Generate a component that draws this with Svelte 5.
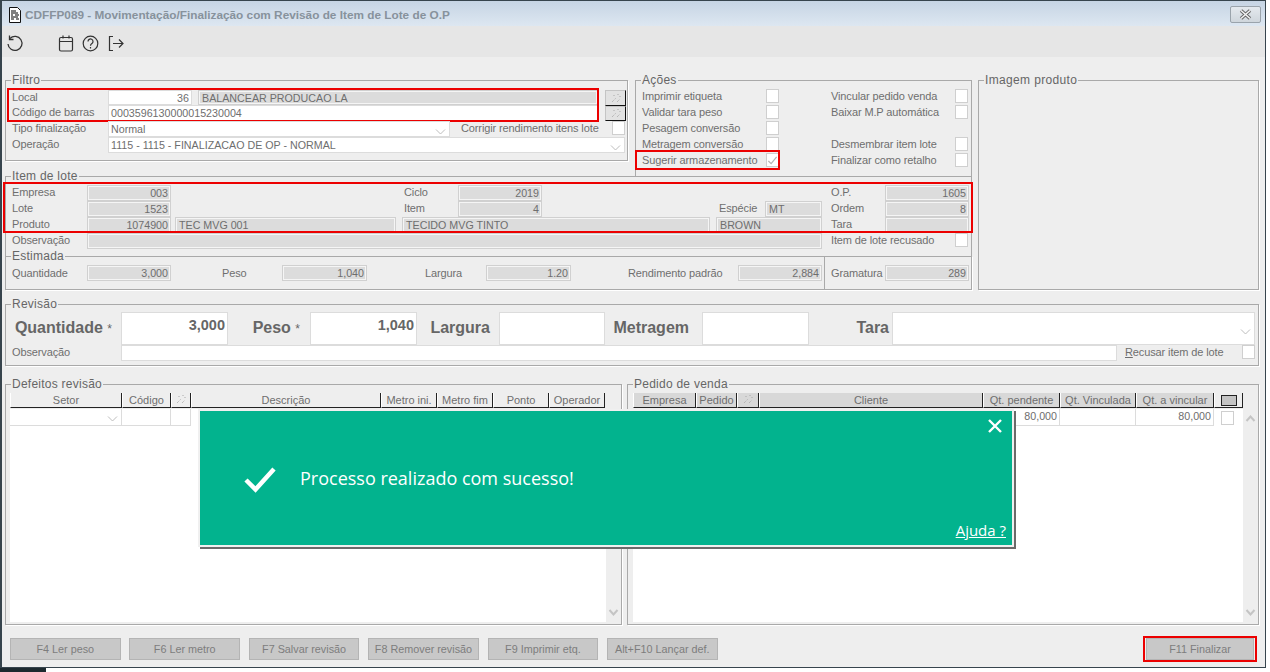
<script>
  const acoes = [
    ['Imprimir etiqueta', false, 'Vincular pedido venda', true],
    ['Validar tara peso', false, 'Baixar M.P automática', true],
    ['Pesagem conversão', false, '', false],
    ['Metragem conversão', false, 'Desmembrar item lote', true]
  ];
  const defeitos = ['Setor', 'Código', '*', 'Descrição', 'Metro ini.', 'Metro fim', 'Ponto', 'Operador'];
  const pedidos = ['Empresa', 'Pedido', '*', 'Cliente', 'Qt. pendente', 'Qt. Vinculada', 'Qt. a vincular'];
  const botoes = ['F4 Ler peso', 'F6 Ler metro', 'F7 Salvar revisão', 'F8 Remover revisão', 'F9 Imprimir etq.', 'Alt+F10 Lançar def.'];
</script>

{#snippet chevron()}
  <svg class="chev" width="11" height="6" viewBox="0 0 11 6"><path d="M1 .5 5.500 5 10 .5" fill="none" stroke="#bdbdbd" /></svg>
{/snippet}

{#snippet wand()}
  <svg width="12" height="10" viewBox="0 0 12 10"><path d="M2 9 6 5M7 9l3-3M8 1v1M4 2v1M10 3v1" stroke="#a8a8a8" stroke-dasharray="1 1" fill="none" /></svg>
{/snippet}

{#snippet scrollbar()}
  <div class="scroll">
    <svg width="11" height="7" viewBox="0 0 11 7"><path d="M1.500 6 5.500 1.500 9.500 6" fill="none" stroke="#c4c4c4" stroke-width="2" /></svg>
    <svg width="11" height="7" viewBox="0 0 11 7"><path d="M1.500 1 5.500 5.500 9.500 1" fill="none" stroke="#c4c4c4" stroke-width="2" /></svg>
  </div>
{/snippet}

<div class="window">
  <header class="titlebar">
    <svg width="14" height="18" viewBox="0 0 14 18"><path d="M1.500 1.500h8l3 3v12h-11z" fill="#fff" stroke="#111" /><path d="M3 5h5M3 7h7M3 9h2M7 9h4M3 11h7M3 13h3M8 13h3" stroke="#000" /></svg>
    <span class="title">CDFFP089 - Movimentação/Finalização com Revisão de Item de Lote de O.P</span>
    <button class="close" aria-label="Fechar">
      <svg width="13" height="11" viewBox="0 0 13 11"><path d="M2 1.500 11 9.500M11 1.500 2 9.500" stroke="#666" stroke-width="3.500" /><path d="M2 1.500 11 9.500M11 1.500 2 9.500" stroke="#f4f4f4" stroke-width="1.500" fill="none" /></svg>
    </button>
  </header>

  <nav class="toolbar">
    <svg class="undo" width="18" height="17" viewBox="0 0 18 17"><path d="M4 3.500A7 7 0 1 1 2 9" fill="none" stroke="#333" stroke-width="1.300" /><path d="M3.500.5v4h4" fill="none" stroke="#333" stroke-width="1.300" /></svg>
    <svg class="cal" width="16" height="17" viewBox="0 0 16 17"><rect x="1.500" y="2.500" width="13" height="13.500" rx="1.500" fill="none" stroke="#333" stroke-width="1.200" /><path d="M1.500 6.500h13M5 .5v3M11 .5v3" stroke="#333" stroke-width="1.200" /></svg>
    <svg class="help" width="17" height="17" viewBox="0 0 17 17"><circle cx="8.500" cy="8.500" r="7.300" fill="none" stroke="#333" stroke-width="1.200" /><path d="M6 6.500a2.500 2.500 0 1 1 4 2c-1 .7-1.500 1-1.500 2.300" fill="none" stroke="#333" stroke-width="1.200" /><path d="M8.500 12v1.500" stroke="#333" stroke-width="1.200" /></svg>
    <svg class="exit" width="16" height="17" viewBox="0 0 16 17"><path d="M5 1.500H1.500v14H5" fill="none" stroke="#333" stroke-width="1.200" /><path d="M5 8.500h10M11 4.500l4 4-4 4" fill="none" stroke="#333" stroke-width="1.200" /></svg>
  </nav>

  <main class="content">
    <div class="top">
      <div class="top-left">
        <div class="top-row">
          <fieldset class="filtro">
            <legend>Filtro</legend>
            <div class="filtro-head">
              <div class="mark mark-filtro">
                <div class="row r-filtro">
                  <span class="lbl">Local</span>
                  <div class="f right white">36</div>
                  <div class="f ro wide">BALANCEAR PRODUCAO LA</div>
                </div>
                <div class="row r-barras">
                  <span class="lbl">Código de barras</span>
                  <div class="f white">0003596130000015230004</div>
                </div>
              </div>
              <div class="wands">
                <button class="wand" aria-label="Pesquisar local">{@render wand()}</button>
                <button class="wand" aria-label="Pesquisar código">{@render wand()}</button>
              </div>
            </div>
            <div class="row r-tipo">
              <span class="lbl">Tipo finalização</span>
              <div class="f white sel">Normal {@render chevron()}</div>
              <span class="lbl corr">Corrigir rendimento itens lote</span>
              <span class="chk"></span>
            </div>
            <div class="row r-op">
              <span class="lbl">Operação</span>
              <div class="f white sel">1115 - 1115 - FINALIZACAO DE OP - NORMAL {@render chevron()}</div>
            </div>
          </fieldset>

          <fieldset class="acoes">
            <legend>Ações</legend>
            <div class="acoes-grid">
              {#each acoes as [a, , b, hasB]}
                <span class="lbl">{a}</span>
                <span class="chk"></span>
                <span></span>
                <span class="lbl">{b}</span>
                {#if hasB}<span class="chk"></span>{:else}<span></span>{/if}
              {/each}
              <div class="mark mark-sugerir">
                <span class="lbl">Sugerir armazenamento</span>
                <span class="chk">
                  <svg width="12" height="11" viewBox="0 0 12 11"><path d="M1.500 6 4.500 9 10.500 1.500" fill="none" stroke="#b4b4b4" stroke-width="1.300" /></svg>
                </span>
              </div>
              <span></span>
              <span class="lbl">Finalizar como retalho</span>
              <span class="chk"></span>
            </div>
          </fieldset>
        </div>

        <fieldset class="item">
          <legend>Item de lote</legend>
          <div class="mark mark-item">
            <div class="item-grid">
              <span class="lbl c1">Empresa</span><div class="f ro right c2">003</div>
              <span class="lbl c6">Ciclo</span><div class="f ro right c7">2019</div>
              <span class="lbl c13">O.P.</span><div class="f ro right c14">1605</div>

              <span class="lbl c1">Lote</span><div class="f ro right c2">1523</div>
              <span class="lbl c6">Item</span><div class="f ro right c7">4</div>
              <span class="lbl c10">Espécie</span><div class="f ro c11">MT</div>
              <span class="lbl c13">Ordem</span><div class="f ro right c14">8</div>

              <span class="lbl c1">Produto</span><div class="f ro right c2">1074900</div>
              <div class="f ro c4">TEC MVG 001</div>
              <div class="f ro c6-8">TECIDO MVG TINTO</div>
              <div class="f ro c10-11">BROWN</div>
              <span class="lbl c13">Tara</span><div class="f ro c14"></div>
            </div>
          </div>
          <div class="item-grid">
            <span class="lbl c1">Observação</span>
            <div class="f ro c2-11"></div>
            <span class="lbl c13">Item de lote recusado</span>
            <span class="chk c14 chk-end"></span>
          </div>
        </fieldset>

        <fieldset class="estimada">
          <legend>Estimada</legend>
          <div class="est-grid">
            <span class="lbl first">Quantidade</span><div class="f ro right">3,000</div><span></span>
            <span class="lbl">Peso</span><div class="f ro right">1,040</div><span></span>
            <span class="lbl">Largura</span><div class="f ro right">1.20</div><span></span>
            <span class="lbl">Rendimento padrão</span><div class="f ro right">2,884</div><span></span>
            <span class="lbl">Gramatura</span><div class="f ro right">289</div>
          </div>
        </fieldset>
      </div>

      <fieldset class="imagem">
        <legend>Imagem produto</legend>
      </fieldset>
    </div>

    <fieldset class="revisao">
      <legend>Revisão</legend>
      <div class="rev-grid">
        <span class="big b-q">Quantidade <small>*</small></span>
        <div class="f white bignum">3,000</div>
        <span class="big b-p">Peso <small>*</small></span>
        <div class="f white bignum">1,040</div>
        <span class="big b-l">Largura</span>
        <div class="f white"></div>
        <span class="big b-m">Metragem</span>
        <div class="f white"></div>
        <span class="big b-t">Tara</span>
        <div class="f white sel">{@render chevron()}</div>
      </div>
      <div class="row r-revobs">
        <span class="lbl">Observação</span>
        <div class="f white"></div>
        <span class="lbl recusar"><u>R</u>ecusar item de lote</span>
        <span class="chk"></span>
      </div>
    </fieldset>

    <div class="tables">
      <fieldset class="tbl">
        <legend>Defeitos revisão</legend>
        <div class="grid-wrap">
          <div class="thead t-def">
            {#each defeitos as h}
              <div class="th">{#if h === '*'}{@render wand()}{:else}{h}{/if}</div>
            {/each}
          </div>
          <div class="tbody-wrap">
            <div class="tbody">
              <div class="tr t-def">
                <div class="td sel">{@render chevron()}</div>
                <div class="td"></div>
                <div class="td"></div>
              </div>
            </div>
            {@render scrollbar()}
          </div>
        </div>
      </fieldset>

      <fieldset class="tbl">
        <legend>Pedido de venda</legend>
        <div class="grid-wrap">
          <div class="thead t-ped dark">
            {#each pedidos as h}
              <div class="th">{#if h === '*'}{@render wand()}{:else}{h}{/if}</div>
            {/each}
            <div class="th th-check"><span class="square"></span></div>
          </div>
          <div class="tbody-wrap">
            <div class="tbody">
              <div class="tr t-ped">
                <div class="td"></div><div class="td"></div><div class="td"></div><div class="td"></div>
                <div class="td right">80,000</div>
                <div class="td"></div>
                <div class="td right">80,000</div>
                <div class="td td-check"><span class="chk"></span></div>
              </div>
            </div>
            {@render scrollbar()}
          </div>
        </div>
      </fieldset>
    </div>

    <footer class="footer">
      {#each botoes as b}
        <button class="btn">{b}</button>
      {/each}
      <div class="mark mark-final">
        <button class="btn final">F11 Finalizar</button>
      </div>
    </footer>
  </main>

  <div class="toast" role="alert">
    <svg class="toast-check" width="34" height="27" viewBox="0 0 34 27"><path d="M3 14 12.500 23.500 31 3" fill="none" stroke="#fff" stroke-width="4.500" /></svg>
    <span class="toast-msg">Processo realizado com sucesso!</span>
    <svg class="toast-x" width="14" height="14" viewBox="0 0 14 14"><path d="M1 1 13 13M13 1 1 13" stroke="#fff" stroke-width="2.400" /></svg>
    <span class="toast-help">Ajuda ?</span>
  </div>
</div>
<div class="taskbar"></div>

<style>
  :global(body) { margin: 0; background: #fff; }
  * { box-sizing: border-box; }

  .window {
    position: relative;
    width: 1266px;
    height: 668px;
    background: #eee;
    border: 1px solid #37444d;
    border-left-width: 2px;
    display: flex;
    flex-direction: column;
    font: 11px/16px "Liberation Sans", Arial, sans-serif;
    color: #6e6e6e;
    overflow: hidden;
  }
  .taskbar { width: 46px; height: 4px; background: #1e2a30; }

  .titlebar {
    height: 25px;
    flex: none;
    display: flex;
    align-items: center;
    padding: 2px 4px 0 6px;
    background: linear-gradient(#c6d4e4, #dde7f1);
  }
  .title { margin-left: 3px; font-weight: bold; font-size: 11.800px; color: #87929c; white-space: nowrap; }
  .close {
    margin-left: auto;
    width: 31px;
    height: 17px;
    padding: 0;
    border: 1px solid #9aa3ab;
    border-radius: 2px;
    background: linear-gradient(#e4e9ee, #cfd6dc);
    display: flex;
    align-items: center;
    justify-content: center;
  }

  .toolbar {
    height: 31px;
    flex: none;
    background: #e6e6e6;
    display: flex;
    align-items: center;
    padding: 3px 0 0 4px;
  }
  .cal { margin-left: 34px; }
  .help { margin-left: 8px; }
  .exit { margin-left: 9px; }

  .content {
    flex: 1;
    display: flex;
    flex-direction: column;
    padding: 17px 5px 0 3px;
    min-height: 0;
  }

  fieldset {
    margin: 0;
    padding: 0;
    min-width: 0;
    border: 1px solid #a9a9a9;
    box-shadow: 1px 1px 0 #fff;
  }
  legend {
    margin-left: 5px;
    padding: 0 1px;
    font-size: 12px;
    line-height: 13px;
    height: 13px;
    color: #666;
    letter-spacing: .25px;
  }

  .top { display: flex; gap: 6px; height: 216px; flex: none; }
  .top-left { width: 967px; flex: none; }
  .top-row { display: flex; gap: 7px; height: 103px; }
  .filtro { width: 623px; height: 87px; flex: none; }
  .acoes { width: 337px; height: 103px; flex: none; border-bottom: 0; box-shadow: none; }
  .imagem { width: 281px; height: 216px; flex: none; }
  .imagem legend { margin-left: 5px; letter-spacing: .35px; }
  .item { margin-top: -7px; height: 87px; border-bottom: 0; box-shadow: none; position: relative; }
  .estimada { margin-top: -7px; height: 40px; position: relative; }
  .estimada::after {
    content: "";
    position: absolute;
    left: 818px;
    top: -7px;
    bottom: 0;
    width: 1px;
    background: #a9a9a9;
  }

  .lbl { white-space: nowrap; line-height: 15px; letter-spacing: -.12px; }
  .f {
    height: 16px;
    padding: 0 2px;
    font-size: 10.700px;
    line-height: 15px;
    white-space: nowrap;
    overflow: hidden;
    border: 1px solid #d6d6d6;
    position: relative;
  }
  .white { background: #fff; border-color: #dcdcdc; }
  .ro { background: #dcdcdc; border-color: #f5f5f5; outline: 1px solid #d0d0d0; outline-offset: -1px; box-shadow: inset 0 0 0 1px #f5f5f5; padding-left: 3px; }
  .right { text-align: right; }
  .sel .chev, .td.sel .chev { position: absolute; right: 3px; top: 7px; }
  .chk {
    display: flex;
    align-items: center;
    justify-content: center;
    width: 13px;
    height: 14px;
    background: #fff;
    border: 1px solid #cfcfcf;
  }

  .mark { position: relative; }
  .mark::after {
    content: "";
    position: absolute;
    border: 2px solid #ec0000;
    pointer-events: none;
  }
  .mark-filtro::after { inset: -2px -1px -1px -1px; }
  .mark-sugerir::after { inset: -3px 0 -1px -7px; }
  .mark-item::after { inset: -3px -2px 0 -3px; }
  .mark-final::after { inset: -2px -3px -2px -3px; }

  .filtro-head { display: flex; padding-top: 3px; height: 34px; }
  .filtro-head .mark { width: 590px; margin-left: 2px; }
  .row { display: grid; align-items: start; }
  .r-filtro { grid-template-columns: 96px 84px 6px 400px; height: 15px; padding-left: 4px; }
  .r-filtro .f { height: 15px; }
  .r-filtro .wide { grid-column: 4; }
  .r-barras { grid-template-columns: 96px 490px; height: 16px; padding-left: 4px; }
  .wands { display: flex; flex-direction: column; margin-left: 7px; }
  .wand {
    width: 21px;
    height: 16px;
    padding: 0;
    background: #e2e2e2;
    border: 1px solid #c4c4c4;
    border-right-color: #111;
    border-bottom-color: #111;
    display: flex;
    align-items: center;
    justify-content: center;
  }
  .r-tipo { grid-template-columns: 96px 342px 11px 151px 14px; padding-left: 6px; height: 16px; }
  .r-tipo .corr { grid-column: 4; }
  .r-op { grid-template-columns: 96px 517px; padding-left: 6px; height: 16px; }

  .acoes-grid {
    display: grid;
    grid-template-columns: 124px 14px 51px 124px 14px;
    grid-auto-rows: 16px;
    padding: 2px 0 0 6px;
    align-items: start;
  }
  .mark-sugerir { grid-column: 1 / 3; display: grid; grid-template-columns: 124px 14px; height: 16px; }

  .item-grid {
    display: grid;
    grid-template-columns: 81px 84px 4px 221px 6px 56px 84px 168px 6px 49px 57px 9px 54px 84px;
    grid-auto-rows: 16px;
  }
  .mark-item { margin-top: 2px; height: 48px; }
  .c1 { grid-column: 1; padding-left: 6px; }
  .c2 { grid-column: 2; }
  .c4 { grid-column: 4; }
  .c6 { grid-column: 6; padding-left: 2px; }
  .c7 { grid-column: 7; }
  .c10 { grid-column: 10; padding-left: 3px; }
  .c11 { grid-column: 11; }
  .c13 { grid-column: 13; }
  .c14 { grid-column: 14; }
  .c6-8 { grid-column: 6 / 9; }
  .c10-11 { grid-column: 10 / 12; }
  .c2-11 { grid-column: 2 / 12; }
  .chk-end { justify-self: end; margin-right: 1px; }

  .est-grid {
    display: grid;
    grid-template-columns: 81px 84px 51px 60px 85px 58px 61px 85px 57px 110px 84px 9px 54px 84px;
    padding-top: 2px;
    align-items: center;
  }
  .first { padding-left: 6px; }

  .revisao { margin-top: 8px; height: 68px; width: 1254px; flex: none; }
  .rev-grid {
    display: grid;
    grid-template-columns: 115px 107px 82px 107px 82px 106px 97px 107px 83px 363px;
    height: 34px;
    padding-top: 1px;
    align-items: start;
  }
  .rev-grid .f { height: 33px; }
  .big { font-size: 16px; font-weight: bold; color: #666; line-height: 32px; text-align: right; white-space: nowrap; }
  .big small { font-size: 12px; font-weight: normal; }
  .b-q { padding-right: 9px; }
  .b-p { padding-right: 10px; }
  .b-l { padding-right: 9px; }
  .b-m { padding-right: 13px; }
  .b-t { padding-right: 3px; }
  .rev-grid .bignum { font-size: 14.500px; font-weight: bold; text-align: right; line-height: 24px; padding-right: 2px; color: #666; }
  .rev-grid .sel .chev { top: 16px; }
  .r-revobs { grid-template-columns: 109px 996px 8px 117px 14px; padding-left: 6px; height: 17px; }
  .recusar { grid-column: 4; }

  .tables { display: flex; gap: 5px; margin-top: 12px; height: 247px; flex: none; }
  .tbl:first-child { width: 617px; }
  .tbl:last-child { width: 632px; }
  .grid-wrap { padding: 2px 0 0 4px; display: flex; flex-direction: column; height: 231px; }
  .tbl:last-child .grid-wrap { padding-left: 5px; }
  .thead { display: grid; height: 15px; }
  .t-def { grid-template-columns: 112px 49px 20px 190px 56px 56px 56px 56px; }
  .t-ped { grid-template-columns: 63px 41px 22px 224px 77px 76px 78px 29px; }
  .th {
    background: #eee;
    border-right: 1.500px solid #222;
    border-bottom: 1px solid #222;
    border-left: 1px solid #fff;
    text-align: center;
    line-height: 14px;
    font-size: 11px;
    overflow: hidden;
    white-space: nowrap;
  }
  .dark .th { background: #d8d8d8; }
  .th-check { display: flex; align-items: center; justify-content: center; }
  .dark .th-check { background: #eee; }
  .square { width: 16px; height: 11px; background: #c4c4c4; border: 1px solid #222; }
  .tbody-wrap { display: flex; flex: 1; margin-top: 1px; min-height: 0; }
  .tbody { flex: 1; background: #fff; min-width: 0; }
  .tr { display: grid; height: 17px; }
  .td {
    position: relative;
    border-right: 1px solid #dcdcdc;
    border-bottom: 1px solid #dcdcdc;
    line-height: 15px;
    padding: 0 2px;
    font-size: 10.700px;
  }
  .td-check { display: flex; align-items: center; padding: 0 0 0 7px; border: 0; }
  .scroll {
    width: 15px;
    flex: none;
    display: flex;
    flex-direction: column;
    justify-content: space-between;
    align-items: center;
    padding: 6px 0 6px;
  }

  .footer {
    display: flex;
    gap: 8.800px;
    margin-top: 13px;
    padding: 0 6px 0 5px;
    align-items: flex-start;
  }
  .btn {
    width: 110.600px;
    height: 22px;
    padding: 0;
    background: #c8c8c8;
    border: 1px solid #b4b4b4;
    color: #7d7d7d;
    font: 10.800px/20px "Liberation Sans", Arial, sans-serif;
    white-space: nowrap;
    overflow: hidden;
  }
  .mark-final { margin-left: auto; display: flex; }
  .final { width: 108px; }

  .toast {
    position: absolute;
    left: 196px;
    top: 408px;
    width: 816px;
    height: 138px;
    background: #02b38e;
    border: 2px solid #f0f0f0;
    box-shadow: 2px 2px 0 #6a6a6a;
    color: #fff;
  }
  .toast-check { position: absolute; left: 43px; top: 55px; }
  .toast-msg {
    position: absolute;
    left: 100px;
    top: 55px;
    font: 18px/24px "Open Sans", sans-serif;
    white-space: nowrap;
  }
  .toast-x { position: absolute; left: 788px; top: 8px; }
  .toast-help {
    position: absolute;
    right: 6px;
    bottom: 5px;
    font: 15px/20px "Open Sans", sans-serif;
    text-decoration: underline;
  }
</style>
